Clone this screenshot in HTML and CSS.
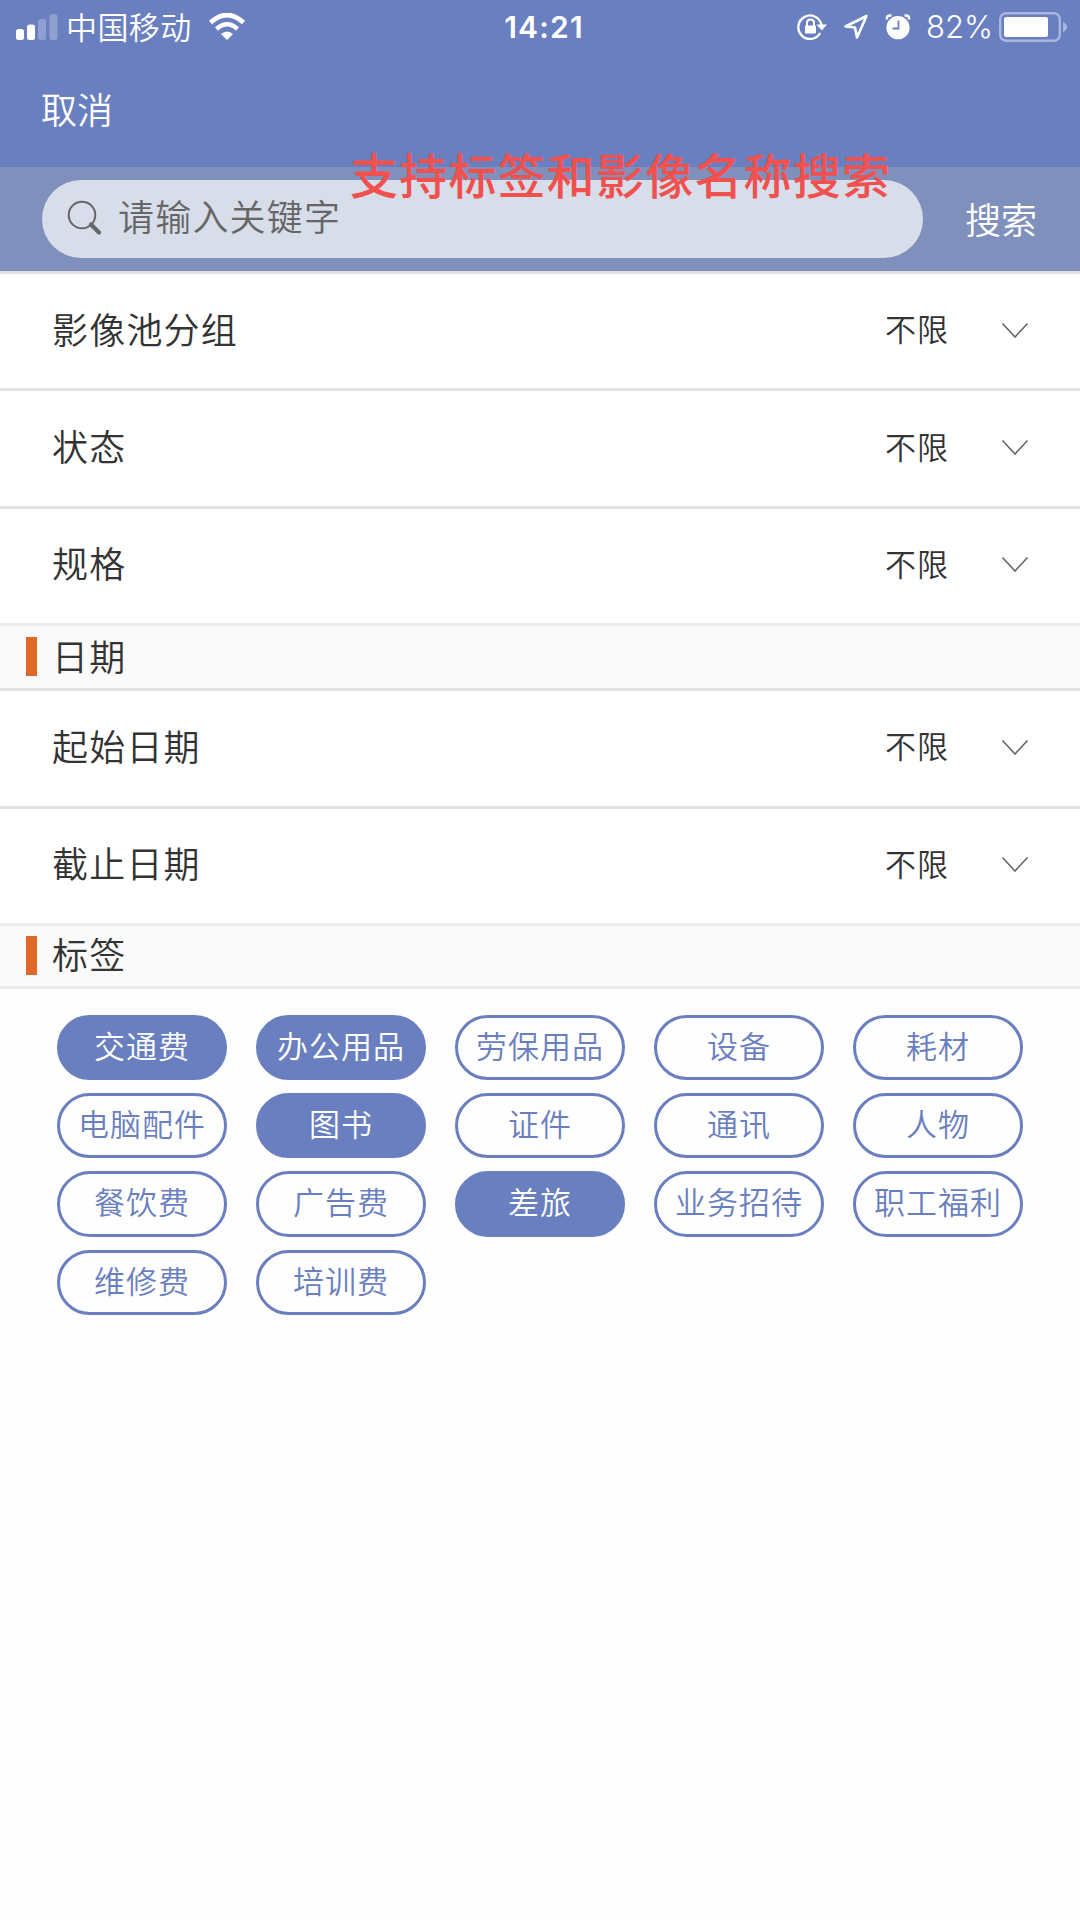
FILE: index.html
```html
<!DOCTYPE html>
<html lang="zh-CN">
<head>
  <meta charset="UTF-8" />
  <meta name="viewport" content="width=device-width, initial-scale=1.0"/>
  <title>影像搜索</title>
  <link rel="stylesheet" href="styles.css">
</head>
<body>

  <header>
    <!-- Status bar -->
    <div class="status">
      <div class="status-left">
        <svg class="signal" width="42" height="26" viewBox="0 0 42 26" fill="#fff">
          <rect x="0" y="15" width="8" height="11" rx="2.5"/>
          <rect x="11" y="10.5" width="8" height="15.5" rx="2.5"/>
          <rect x="22" y="5" width="8" height="21" rx="2.5" opacity=".25"/>
          <rect x="33.5" y="0" width="8" height="26" rx="2.5" opacity=".25"/>
        </svg>
        <span class="carrier">中国移动</span>
        <svg class="wifi" width="38" height="28" viewBox="0 0 38 28">
          <path d="M2.5 9.5Q19-5.5 35.5 9.5" fill="none" stroke="#fff" stroke-width="4.6"/>
          <path d="M8.5 16Q19 6.5 29.5 16" fill="none" stroke="#fff" stroke-width="4.4"/>
          <path d="M13 21Q19 16 25 21L19 27Z" fill="#fff"/>
        </svg>
      </div>
      <span class="time">14:21</span>
      <div class="status-right">
        <svg class="lock" width="30" height="28" viewBox="0 0 30 28">
          <path d="M23.2 20A11.7 11.7 0 1 1 24.5 12" fill="none" stroke="#fff" stroke-width="2.3"/>
          <path d="M19.5 11.5H30L24.8 17.5Z" fill="#fff"/>
          <rect x="8" y="12.5" width="11" height="8" rx="1" fill="#fff"/>
          <path d="M10 13V10Q10 6.5 13.5 6.5T17 10V13" fill="none" stroke="#fff" stroke-width="2"/>
        </svg>
        <svg class="arrow" width="26" height="26" viewBox="0 0 26 26">
          <path d="M23.5 2L2.5 12.5L12 13.5L14 23.5Z" fill="none" stroke="#fff" stroke-width="2.6" stroke-linejoin="round"/>
        </svg>
        <svg class="alarm" width="26" height="26" viewBox="0 0 26 26">
          <circle cx="13" cy="13.7" r="11.6" fill="#fff"/>
          <path d="M2 5.5Q1 1 6.5 1.5M24 5.5Q25 1 19.5 1.5" fill="none" stroke="#fff" stroke-width="2.4"/>
          <path d="M13.5 6.5V14.5H7.5" fill="none" stroke="#6a7fbf" stroke-width="1.8"/>
        </svg>
        <span class="percent">82%</span>
        <svg class="battery" width="70" height="30" viewBox="0 0 70 30">
          <rect x="1.2" y="1.2" width="59.6" height="27.6" rx="6" fill="none" stroke="#a9b6e0" stroke-width="2.4"/>
          <rect x="5" y="5" width="44" height="20" rx="2" fill="#fff"/>
          <path d="M64 10Q68 12 68 15T64 20Z" fill="#a9b6e0"/>
        </svg>
      </div>
    </div>
    <a class="cancel">取消</a>
  </header>

  <!-- Search -->
  <div class="search">
    <div class="search-box">
      <svg width="36" height="36" viewBox="0 0 36 36" fill="none" stroke="#666">
        <circle cx="15" cy="15" r="13.3" stroke-width="2"/>
        <path d="M24 24.5L32 32.5" stroke-width="4.2" stroke-linecap="round"/>
      </svg>
      <span>请输入关键字</span>
    </div>
    <a class="search-btn">搜索</a>
    <p class="note">支持标签和影像名称搜索</p>
  </div>

  <main>
    <div class="row">
      <span class="name">影像池分组</span>
      <span class="value">不限</span>
      <svg class="chevron" width="28" height="20" viewBox="0 0 28 20"><path d="M1.5 5.5L14 19L26.5 5.5"/></svg>
    </div>
    <div class="row">
      <span class="name">状态</span>
      <span class="value">不限</span>
      <svg class="chevron" width="28" height="20" viewBox="0 0 28 20"><path d="M1.5 5.5L14 19L26.5 5.5"/></svg>
    </div>
    <div class="row last">
      <span class="name">规格</span>
      <span class="value">不限</span>
      <svg class="chevron" width="28" height="20" viewBox="0 0 28 20"><path d="M1.5 5.5L14 19L26.5 5.5"/></svg>
    </div>

    <h2 class="title date">日期</h2>
    <div class="row">
      <span class="name">起始日期</span>
      <span class="value">不限</span>
      <svg class="chevron" width="28" height="20" viewBox="0 0 28 20"><path d="M1.5 5.5L14 19L26.5 5.5"/></svg>
    </div>
    <div class="row last">
      <span class="name">截止日期</span>
      <span class="value">不限</span>
      <svg class="chevron" width="28" height="20" viewBox="0 0 28 20"><path d="M1.5 5.5L14 19L26.5 5.5"/></svg>
    </div>

    <h2 class="title">标签</h2>
    <div class="tags">
      <span class="tag active">交通费</span>
      <span class="tag active">办公用品</span>
      <span class="tag">劳保用品</span>
      <span class="tag">设备</span>
      <span class="tag">耗材</span>
      <span class="tag">电脑配件</span>
      <span class="tag active">图书</span>
      <span class="tag">证件</span>
      <span class="tag">通讯</span>
      <span class="tag">人物</span>
      <span class="tag">餐饮费</span>
      <span class="tag">广告费</span>
      <span class="tag active">差旅</span>
      <span class="tag">业务招待</span>
      <span class="tag">职工福利</span>
      <span class="tag">维修费</span>
      <span class="tag">培训费</span>
    </div>
  </main>

</body>
</html>
```
FILE: styles.css
```css
* { margin: 0; padding: 0; box-sizing: border-box; }
body { font-family: "Noto Sans CJK SC", sans-serif; font-weight: 350; background-color: #fefefe; color: #333; min-height: 1920px; }
svg { display: block; flex: none; }

header { height: 167px; background-color: #6a7fbf; color: white; }
.status { display: grid; grid-template-columns: 1fr auto 1fr; align-items: center; height: 53px; padding: 0 11px 0 16px; }
.status-left, .status-right { display: flex; align-items: center; }
.status-right { justify-content: flex-end; }
.carrier { margin-left: 8px; font-size: 31px; letter-spacing: 0.4px; line-height: 48px; padding-bottom: 2px; }
.wifi { margin-left: 16px; }
.time { font-family: Inter, sans-serif; font-size: 30px; font-weight: 600; letter-spacing: 1.2px; line-height: 50px; padding: 1px 0 0 3px; }
.arrow { margin-left: 16px; }
.alarm { margin-left: 16px; }
.percent { margin-left: 15px; font-family: Inter, sans-serif; font-size: 31px; font-weight: 350; line-height: 50px; padding-top: 1px; }
.battery { margin-left: 6px; }
.cancel { display: block; padding-left: 41px; font-size: 36px; line-height: 52px; margin-top: 29px; }

.search { position: relative; display: flex; align-items: center; height: 107px; padding: 0 42px 1px; background-color: #8090bd; border-bottom: 3px solid #e2e2e4; }
.search-box { display: flex; align-items: center; width: 881px; height: 78px; padding-left: 25px; border-radius: 39px; background-color: #d7dde9; color: #666; }
.search-box svg { margin-top: -2px; }
.search-box span { margin: -8px 0 0 15px; font-size: 36px; letter-spacing: 1.2px; }
.search-btn { margin-left: 42px; padding-bottom: 1px; color: white; font-size: 36px; }
.note { position: absolute; left: 350px; top: -29px; color: #f0504e; font-size: 48px; font-weight: 500; letter-spacing: 1.2px; line-height: 70px; white-space: nowrap; }

.row { display: flex; align-items: center; height: 117.4px; padding: 0 51px 7px 52px; background-color: #fff; border-bottom: 3px solid #e2e2e2; }
.row.last { border-color: #ececec; }
.name { flex: 1; font-size: 36px; letter-spacing: 1.2px; }
.value { font-size: 31px; letter-spacing: 1px; }
.chevron { margin-left: 52px; fill: none; stroke: #666; stroke-width: 1.6; }

.title { display: flex; align-items: center; height: 63px; background-color: #fafafa; border-bottom: 3px solid #ececec; padding: 0 0 5px 26px; font-size: 36px; font-weight: 350; line-height: 50px; letter-spacing: 1.2px; }
.title.date { height: 65px; border-color: #e2e2e2; }
.title::before { content: ""; width: 11px; height: 39px; margin: 4px 15px 0 0; background-color: #de6926; }

.tags { display: grid; grid-template-columns: repeat(5, 170px); gap: 13px 29px; padding: 26px 57px; }
.tag { display: flex; align-items: center; justify-content: center; height: 65.2px; padding-bottom: 5px; border: 3px solid #6a7fbf; border-radius: 33px; color: #6a7fbf; font-size: 31px; line-height: 46px; letter-spacing: 1px; }
.tag.active { background-color: #6a7fbf; color: white; }
```
